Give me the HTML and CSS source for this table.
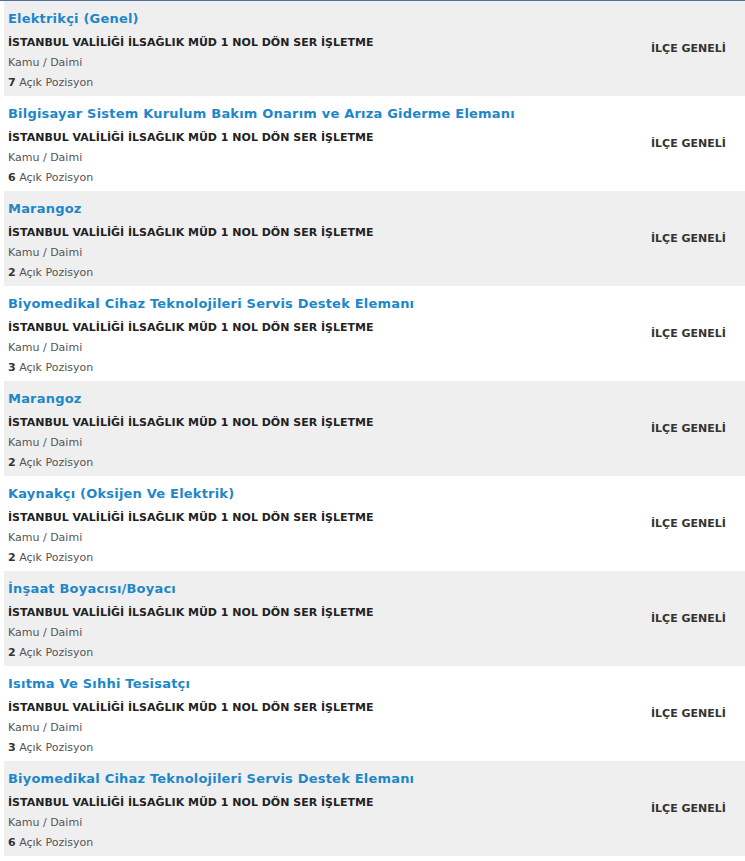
FILE: index.html
```html
<!DOCTYPE html>
<html lang="tr">
<head>
<meta charset="utf-8">
<title>İlanlar</title>
<link rel="stylesheet" href="styles.css">
</head>
<body>
<div class="list">
  <div class="row alt">
    <div class="main">
      <a class="title" href="#">Elektrikçi (Genel)</a>
      <div class="org">İSTANBUL VALİLİĞİ İLSAĞLIK MÜD 1 NOL DÖN SER İŞLETME</div>
      <div class="meta">Kamu / Daimi</div>
      <div class="meta"><b>7</b> Açık Pozisyon</div>
    </div>
    <div class="loc">İLÇE GENELİ</div>
  </div>
  <div class="row">
    <div class="main">
      <a class="title" href="#">Bilgisayar Sistem Kurulum Bakım Onarım ve Arıza Giderme Elemanı</a>
      <div class="org">İSTANBUL VALİLİĞİ İLSAĞLIK MÜD 1 NOL DÖN SER İŞLETME</div>
      <div class="meta">Kamu / Daimi</div>
      <div class="meta"><b>6</b> Açık Pozisyon</div>
    </div>
    <div class="loc">İLÇE GENELİ</div>
  </div>
  <div class="row alt">
    <div class="main">
      <a class="title" href="#">Marangoz</a>
      <div class="org">İSTANBUL VALİLİĞİ İLSAĞLIK MÜD 1 NOL DÖN SER İŞLETME</div>
      <div class="meta">Kamu / Daimi</div>
      <div class="meta"><b>2</b> Açık Pozisyon</div>
    </div>
    <div class="loc">İLÇE GENELİ</div>
  </div>
  <div class="row">
    <div class="main">
      <a class="title" href="#">Biyomedikal Cihaz Teknolojileri Servis Destek Elemanı</a>
      <div class="org">İSTANBUL VALİLİĞİ İLSAĞLIK MÜD 1 NOL DÖN SER İŞLETME</div>
      <div class="meta">Kamu / Daimi</div>
      <div class="meta"><b>3</b> Açık Pozisyon</div>
    </div>
    <div class="loc">İLÇE GENELİ</div>
  </div>
  <div class="row alt">
    <div class="main">
      <a class="title" href="#">Marangoz</a>
      <div class="org">İSTANBUL VALİLİĞİ İLSAĞLIK MÜD 1 NOL DÖN SER İŞLETME</div>
      <div class="meta">Kamu / Daimi</div>
      <div class="meta"><b>2</b> Açık Pozisyon</div>
    </div>
    <div class="loc">İLÇE GENELİ</div>
  </div>
  <div class="row">
    <div class="main">
      <a class="title" href="#">Kaynakçı (Oksijen Ve Elektrik)</a>
      <div class="org">İSTANBUL VALİLİĞİ İLSAĞLIK MÜD 1 NOL DÖN SER İŞLETME</div>
      <div class="meta">Kamu / Daimi</div>
      <div class="meta"><b>2</b> Açık Pozisyon</div>
    </div>
    <div class="loc">İLÇE GENELİ</div>
  </div>
  <div class="row alt">
    <div class="main">
      <a class="title" href="#">İnşaat Boyacısı/Boyacı</a>
      <div class="org">İSTANBUL VALİLİĞİ İLSAĞLIK MÜD 1 NOL DÖN SER İŞLETME</div>
      <div class="meta">Kamu / Daimi</div>
      <div class="meta"><b>2</b> Açık Pozisyon</div>
    </div>
    <div class="loc">İLÇE GENELİ</div>
  </div>
  <div class="row">
    <div class="main">
      <a class="title" href="#">Isıtma Ve Sıhhi Tesisatçı</a>
      <div class="org">İSTANBUL VALİLİĞİ İLSAĞLIK MÜD 1 NOL DÖN SER İŞLETME</div>
      <div class="meta">Kamu / Daimi</div>
      <div class="meta"><b>3</b> Açık Pozisyon</div>
    </div>
    <div class="loc">İLÇE GENELİ</div>
  </div>
  <div class="row alt">
    <div class="main">
      <a class="title" href="#">Biyomedikal Cihaz Teknolojileri Servis Destek Elemanı</a>
      <div class="org">İSTANBUL VALİLİĞİ İLSAĞLIK MÜD 1 NOL DÖN SER İŞLETME</div>
      <div class="meta">Kamu / Daimi</div>
      <div class="meta"><b>6</b> Açık Pozisyon</div>
    </div>
    <div class="loc">İLÇE GENELİ</div>
  </div>
</div>
</body>
</html>
```

FILE: styles.css
```css
html, body {
  margin: 0;
  padding: 0;
  background: #ffffff;
}
body {
  font-family: "DejaVu Sans", Verdana, sans-serif;
  color: #333333;
}
.list {
  border-top: 1px solid #50709a;
  padding-left: 4px;
}
.row {
  display: flex;
  align-items: center;
  height: 95px;
  box-sizing: border-box;
  background: #ffffff;
}
.row.alt {
  background: #efefef;
}
.main {
  flex: 1;
  padding: 8px 0 3px 4px;
  display: flex;
  flex-direction: column;
  align-self: stretch;
  box-sizing: border-box;
}
.title {
  display: block;
  font-size: 13px;
  font-weight: bold;
  letter-spacing: 0.2px;
  line-height: 20px;
  color: #1d87c9;
  text-decoration: none;
  margin-bottom: 4px;
}
.org {
  font-size: 11px;
  font-weight: bold;
  line-height: 20px;
  color: #222222;
}
.meta {
  font-size: 11px;
  line-height: 20px;
  color: #555555;
}
.meta b {
  color: #333333;
}
.loc {
  width: 94px;
  font-size: 11px;
  font-weight: bold;
  color: #333333;
}
```
